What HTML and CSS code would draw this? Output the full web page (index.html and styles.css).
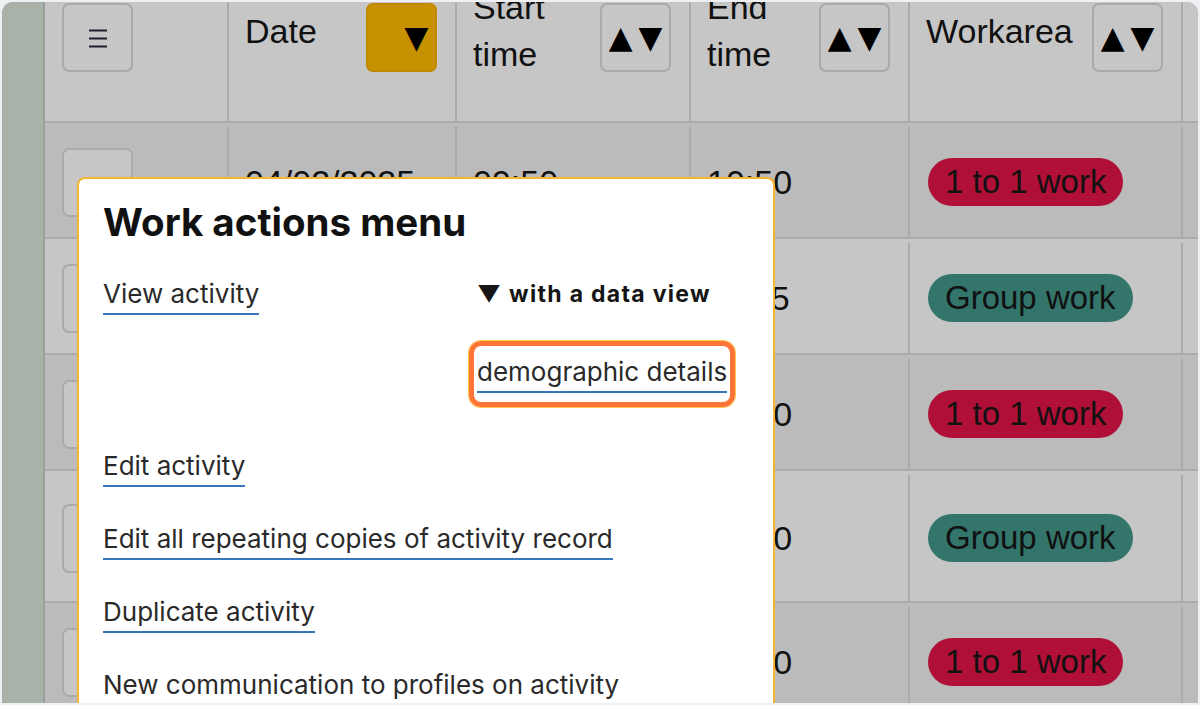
FILE: index.html
```html
<!DOCTYPE html>
<html lang="en">
<head>
<meta charset="utf-8">
<title>Work actions menu</title>
<link rel="stylesheet" href="styles.css">
</head>
<body>
<div class="frame">
  <div class="strip"></div>
  <div class="table">
    <div class="tr thead">
      <div class="th th-menu">
        <button class="hbtn" aria-label="Menu">
          <svg width="20" height="20" viewBox="0 0 20 20" aria-hidden="true"><path d="M1 2.5h18M1 10.5h18M1 18.5h18" stroke="#1e1e2a" stroke-width="1.8" fill="none"/></svg>
        </button>
      </div>
      <div class="th"><div class="th-label"><span>Date</span></div><button class="hbtn sort active"><span class="up">▲</span><span>▼</span></button></div>
      <div class="th"><div class="th-label"><span>Start time</span></div><button class="hbtn sort"><span>▲</span><span>▼</span></button></div>
      <div class="th"><div class="th-label"><span>End time</span></div><button class="hbtn sort"><span>▲</span><span>▼</span></button></div>
      <div class="th"><div class="th-label"><span>Workarea</span></div><button class="hbtn sort"><span>▲</span><span>▼</span></button></div>
      <div class="th th-last"></div>
    </div>

    <div class="tr row odd">
      <div class="td td-first"><button class="rbtn"></button></div>
      <div class="td">04/02/2025</div>
      <div class="td">09:50</div>
      <div class="td">10:50</div>
      <div class="td"><span class="pill red">1 to 1 work</span></div>
      <div class="td"></div>
    </div>
    <div class="tr row even">
      <div class="td td-first"><button class="rbtn"></button></div>
      <div class="td">05/02/2025</div>
      <div class="td">10:15</div>
      <div class="td">11:15</div>
      <div class="td"><span class="pill teal">Group work</span></div>
      <div class="td"></div>
    </div>
    <div class="tr row odd">
      <div class="td td-first"><button class="rbtn"></button></div>
      <div class="td">06/02/2025</div>
      <div class="td">09:00</div>
      <div class="td">10:00</div>
      <div class="td"><span class="pill red">1 to 1 work</span></div>
      <div class="td"></div>
    </div>
    <div class="tr row even row-tall">
      <div class="td td-first"><button class="rbtn"></button></div>
      <div class="td">07/02/2025</div>
      <div class="td">13:00</div>
      <div class="td">14:00</div>
      <div class="td"><span class="pill teal">Group work</span></div>
      <div class="td"></div>
    </div>
    <div class="tr row odd">
      <div class="td td-first"><button class="rbtn"></button></div>
      <div class="td">10/02/2025</div>
      <div class="td">11:00</div>
      <div class="td">12:00</div>
      <div class="td"><span class="pill red">1 to 1 work</span></div>
      <div class="td"></div>
    </div>
  </div>

  <div class="modal" role="dialog" aria-label="Work actions menu">
    <h2 class="modal-title">Work actions menu</h2>
    <div class="menu-row">
      <div><a class="mlink" href="#">View activity</a></div>
      <div class="dataview">
        <div class="dv-summary">▼ with a data view</div>
        <div class="highlight"><a class="mlink" href="#">demographic details</a></div>
      </div>
    </div>
    <div class="menu-list">
      <a class="mlink" href="#">Edit activity</a>
      <a class="mlink" href="#">Edit all repeating copies of activity record</a>
      <a class="mlink" href="#">Duplicate activity</a>
      <a class="mlink" href="#">New communication to profiles on activity</a>
    </div>
  </div>
</div>
</body>
</html>
```

FILE: styles.css
```css
html, body {
  margin: 0;
  padding: 0;
}
body {
  background: #eef0f3;
  width: 1200px;
  height: 705px;
  overflow: hidden;
  font-family: "Liberation Sans", Arial, sans-serif;
}
.frame {
  position: relative;
  margin: 2px 2px 0 2px;
  height: 701px;
  border-radius: 11px 11px 0 0;
  overflow: hidden;
  display: flex;
  background: #c6c6c6;
}
.strip {
  width: 41px;
  flex: 0 0 41px;
  background: #a9b2a9;
  border-right: 2px solid #9c9f9c;
}
.table {
  flex: 1;
  display: flex;
  flex-direction: column;
}
.tr {
  flex: 0 0 auto;
  display: grid;
  grid-template-columns: 182px 228px 234px 219px 273px 1fr;
  box-sizing: border-box;
  border-bottom: 2px solid #ababab;
}
.thead {
  height: 121px;
  background: #c6c6c6;
}
.th {
  display: flex;
  justify-content: space-between;
  align-items: flex-start;
  padding: 1px 18px 0 16px;
  border-left: 2px solid #ababab;
  color: #111;
  font-size: 34px;
  line-height: 47px;
  min-width: 0;
}
.th-menu {
  border-left: none;
  padding-left: 17px;
}
.th-label {
  height: 56px;
  display: flex;
  align-items: center;
  min-width: 0;
}
.hbtn {
  flex: 0 0 auto;
  box-sizing: border-box;
  width: 71px;
  height: 69px;
  border: 2px solid #aaaaaa;
  border-radius: 7px;
  background: #c6c6c6;
  display: flex;
  align-items: center;
  justify-content: center;
  padding: 0;
  font-family: "DejaVu Sans", sans-serif;
  font-size: 31px;
  line-height: 1;
  color: #000;
  gap: 6px;
}
.hbtn.active {
  background: #c79100;
  border-color: #c08a00;
}
.hbtn .up {
  visibility: hidden;
}
.row {
  height: 116px;
  padding-top: 4px;
}
.row-tall {
  height: 132px;
}
.odd {
  background: #bbbbbb;
}
.even {
  background: #c6c6c6;
}
.td {
  display: flex;
  align-items: center;
  padding: 0 18px 0 16px;
  border-left: 2px solid #ababab;
  color: #111;
  font-size: 34px;
  white-space: nowrap;
  min-width: 0;
}
.td-first {
  border-left: none;
  padding-left: 17px;
}
.rbtn {
  box-sizing: border-box;
  width: 71px;
  height: 69px;
  border: 2px solid #aaaaaa;
  border-radius: 7px;
  background: #c6c6c6;
  padding: 0;
}
.pill {
  display: inline-block;
  height: 48px;
  line-height: 48px;
  padding: 0 17px;
  border-radius: 24px;
  font-size: 33px;
  color: #111;
  margin-left: 2px;
}
.pill.red {
  background: #b01038;
}
.pill.teal {
  background: #33756b;
}

/* modal */
.modal {
  position: absolute;
  left: 75px;
  top: 175px;
  width: 698px;
  height: 560px;
  box-sizing: border-box;
  background: #ffffff;
  border: 2px solid #f6b530;
  border-radius: 8px;
  padding: 21px 24px 0 24px;
  font-family: "Inter", "Noto Sans", sans-serif;
  color: #222;
}
.modal-title {
  margin: 0 0 33px 0;
  font-size: 38.5px;
  line-height: 44px;
  font-weight: 700;
  color: #111;
}
.menu-row {
  display: grid;
  grid-template-columns: 366px auto;
  align-items: start;
  margin-bottom: 42px;
}
.mlink {
  display: inline-block;
  font-size: 26px;
  line-height: 34px;
  padding-bottom: 2px;
  border-bottom: 2px solid #3a76c0;
  color: #2a2a2a;
  text-decoration: none;
}
.dataview {
  display: flex;
  flex-direction: column;
  align-items: flex-start;
}
.dv-summary {
  padding-left: 8px;
  font-size: 23px;
  line-height: 34px;
  font-weight: 700;
  letter-spacing: 1.3px;
  color: #151515;
  margin-bottom: 30px;
}
.highlight {
  border: 5px solid #ff7538;
  border-radius: 12px;
  padding: 9px 3px;
  box-shadow: 0 0 0 1px #ffc94f;
}
.menu-list {
  display: flex;
  flex-direction: column;
  align-items: flex-start;
  gap: 35px;
}
```
